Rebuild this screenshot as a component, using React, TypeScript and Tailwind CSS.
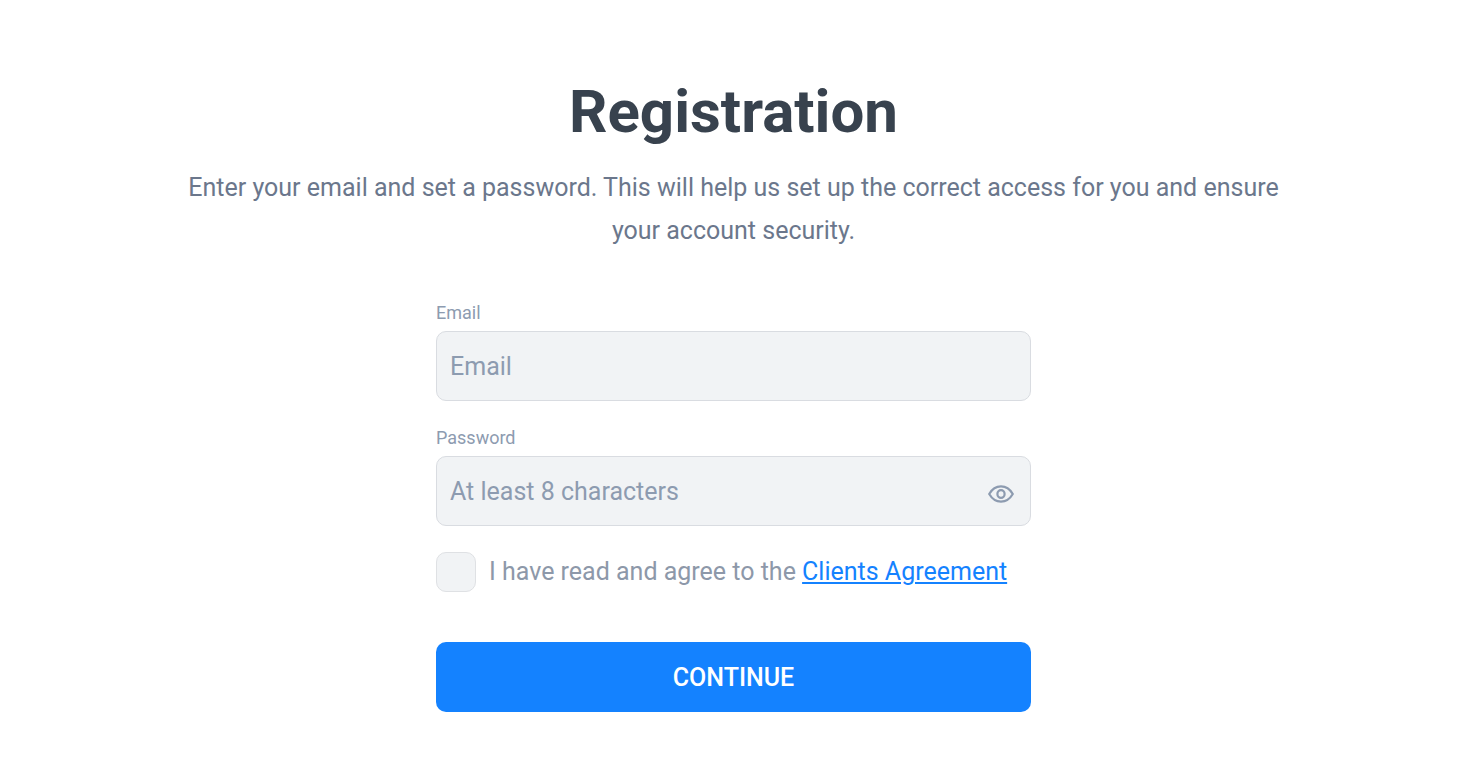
import { useState } from "react";
import type { ReactNode } from "react";

function fieldClassName() {
  return "h-[70px] w-full rounded-[10px] border border-[#d9dce1] bg-[#f1f3f5] px-[13px] text-[25px] text-[#38424e] outline-none placeholder:text-[#8d9bb0] focus:border-[#1482ff]";
}

function Field({ children, htmlFor, label }: { children: ReactNode; htmlFor: string; label: string }) {
  return (
    <div>
      <label htmlFor={htmlFor} className="block text-[18px] leading-9 text-[#8d9bb0]">
        {label}
      </label>
      {children}
    </div>
  );
}

function EyeIcon() {
  return (
    <svg viewBox="0 0 26 20" className="h-5 w-[26px]" fill="none" stroke="currentColor" strokeWidth="2.2" aria-hidden="true">
      <path d="M1.2 10C4 5.2 8 2.4 13 2.4S22 5.2 24.8 10C22 14.8 18 17.6 13 17.6S4 14.8 1.2 10Z" strokeLinejoin="round" />
      <ellipse cx="13" cy="10" rx="3.6" ry="3.9" />
    </svg>
  );
}

export default function App() {
  const [visible, setVisible] = useState(false);

  return (
    <main className="min-h-screen bg-white pt-[77px] pr-[25px] pb-16 pl-6 font-['Roboto',sans-serif]">
      <h1 className="text-center text-[60px] leading-[70px] font-bold text-[#38424e]">Registration</h1>
      <p className="mx-auto mt-[19px] max-w-[1110px] text-center text-[25px] leading-[43px] text-[#6b778c]">
        Enter your email and set a password. This will help us set up the correct access for you and ensure your account
        security.
      </p>

      <form className="mx-auto mt-[43px] w-full max-w-[595px]" onSubmit={(event) => event.preventDefault()}>
        <div className="space-y-[19px]">
          <Field htmlFor="email" label="Email">
            <input id="email" name="email" type="email" placeholder="Email" className={fieldClassName()} />
          </Field>
          <Field htmlFor="password" label="Password">
            <div className="relative">
              <input
                id="password"
                name="password"
                type={visible ? "text" : "password"}
                placeholder="At least 8 characters"
                className={fieldClassName()}
              />
              <button
                type="button"
                aria-label={visible ? "Hide password" : "Show password"}
                onClick={() => setVisible(!visible)}
                className="absolute top-7 right-[17px] text-[#8d9bb0]"
              >
                <EyeIcon />
              </button>
            </div>
          </Field>
        </div>

        <div className="mt-[26px] flex items-center gap-[13px]">
          <input
            id="agreement"
            name="agreement"
            type="checkbox"
            className="size-10 shrink-0 appearance-none rounded-[10px] border border-[#dfe1e4] bg-[#f1f3f5] checked:bg-[#1482ff]"
          />
          <label htmlFor="agreement" className="text-[25px] leading-10 text-[#8d98a9]">
            I have read and agree to the{" "}
            <a href="#agreement" className="text-[#1482ff] underline">
              Clients Agreement
            </a>
          </label>
        </div>

        <button type="submit" className="mt-[50px] h-[70px] w-full rounded-[10px] bg-[#1482ff] pt-0.5 text-[25px] font-medium text-white">
          CONTINUE
        </button>
      </form>
    </main>
  );
}
